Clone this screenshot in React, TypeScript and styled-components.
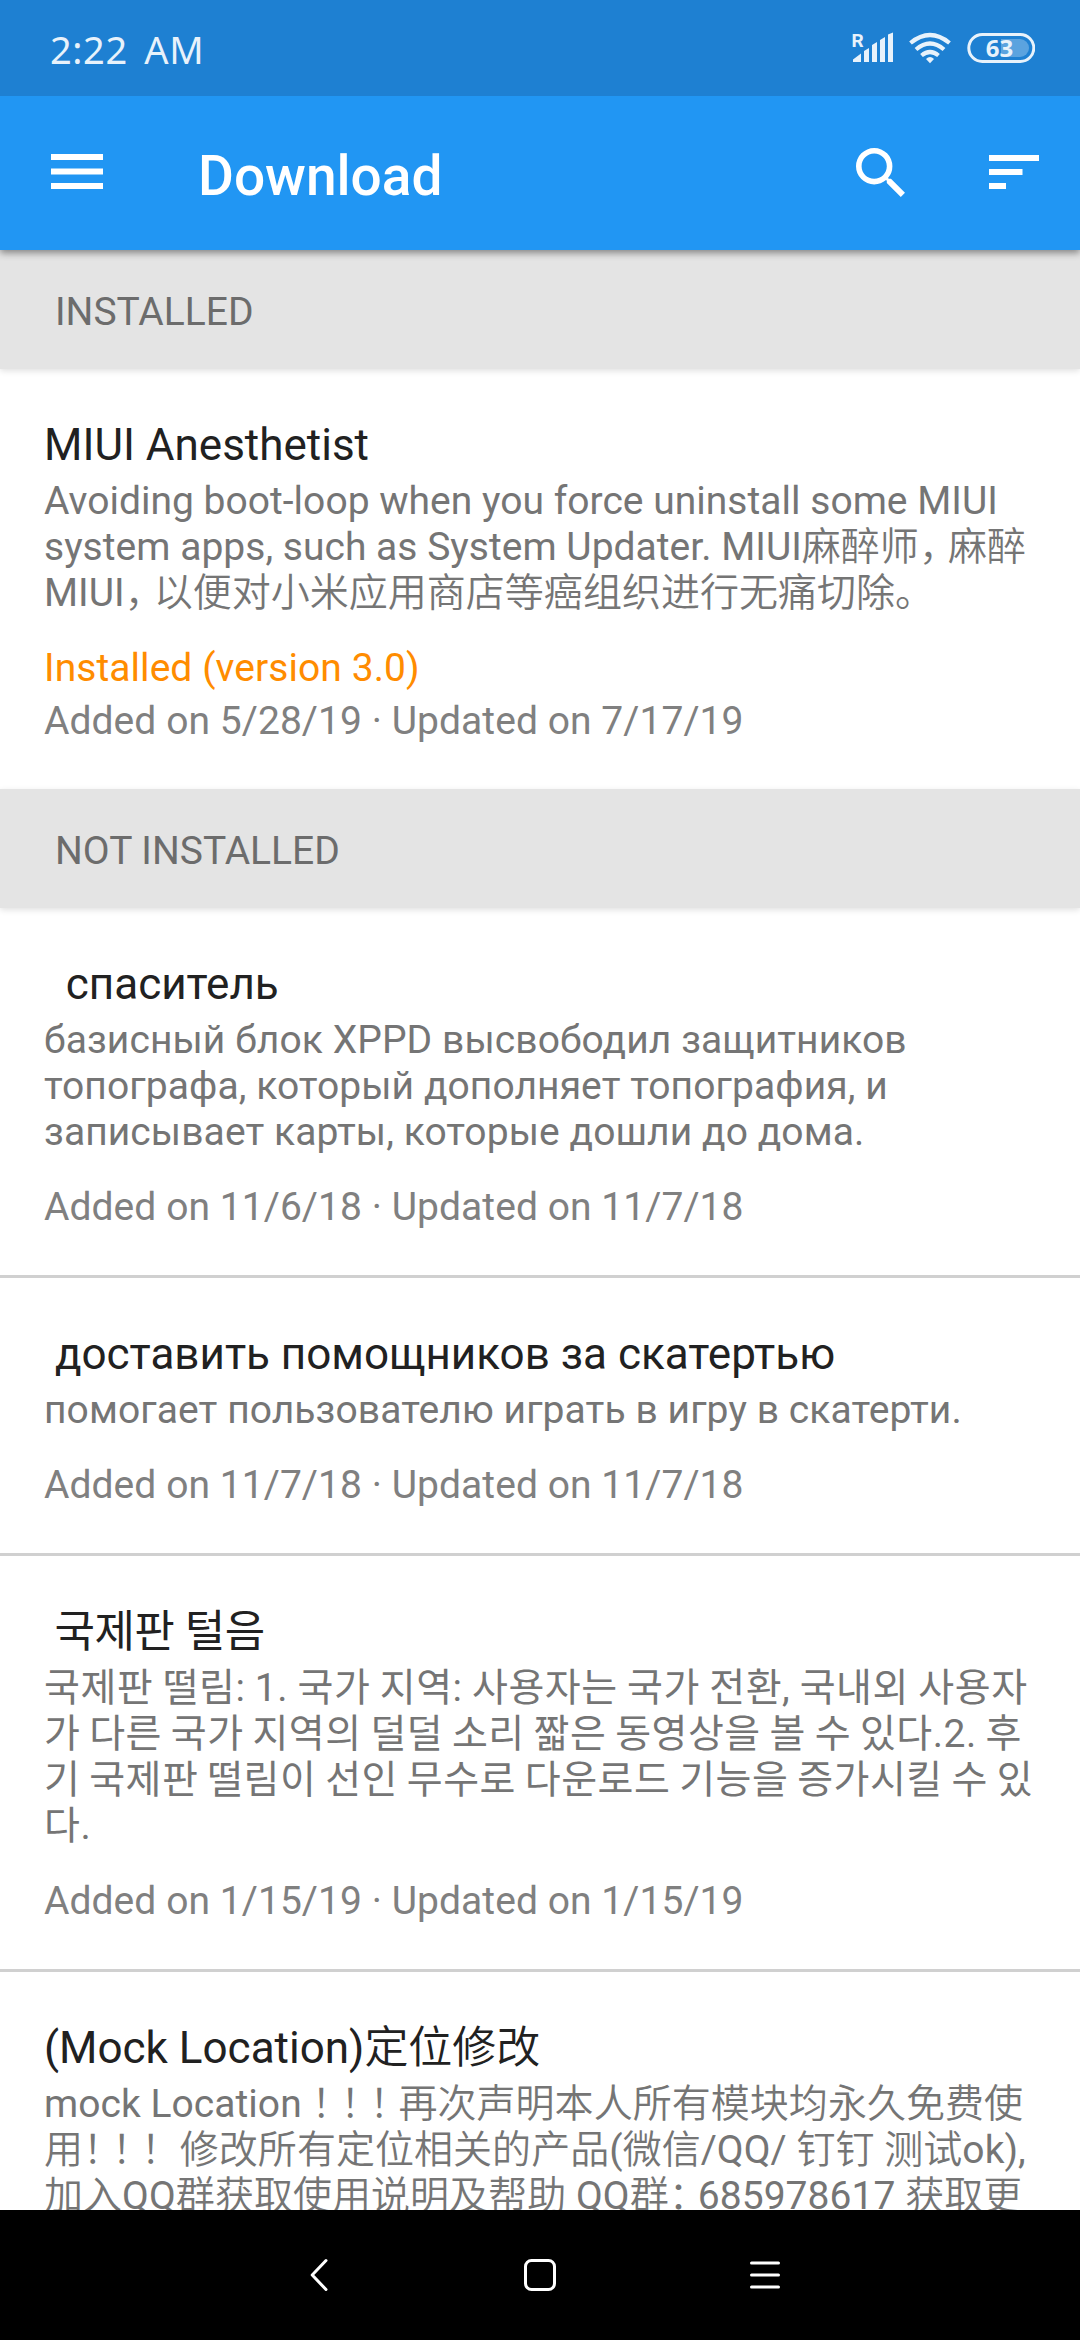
import React from "react";
import styled, { createGlobalStyle } from "styled-components";

const Global = createGlobalStyle`
  *{box-sizing:border-box}
  html,body{margin:0;padding:0;background:#fff}
  body{font-family:Roboto,"Noto Sans CJK KR",sans-serif;overflow:hidden}
`;

const Screen = styled.div`
  width: 1080px;
  height: 2340px;
  display: flex;
  flex-direction: column;
  overflow: hidden;
  background: #fff;
`;

const StatusBar = styled.header`
  height: 96px;
  flex: none;
  display: flex;
  align-items: center;
  justify-content: space-between;
  padding: 0 45px 0 50px;
  background: #1e80d2;
  color: #e8f2fb;
  z-index: 2;
`;

const Clock = styled.span`
  font: 400 38px/44px "Noto Sans", sans-serif;
  letter-spacing: 0.6px;
  word-spacing: 6px;
  padding-top: 1px;
`;

const StatusIcons = styled.svg`
  width: 184px;
  height: 36px;
  flex: none;
`;

const Toolbar = styled.nav`
  height: 154px;
  flex: none;
  display: flex;
  align-items: center;
  padding: 0 41px 2px 51px;
  background: #2196f3;
  color: #fff;
  z-index: 1;
  box-shadow: 0 3px 7px rgba(0, 0, 0, 0.42);
`;

const Glyph = styled.svg<{ $w: number; $h: number }>`
  width: ${(p) => p.$w}px;
  height: ${(p) => p.$h}px;
  flex: none;
  display: block;
`;

const Heading = styled.h1`
  flex: 1;
  margin: 0 0 0 95px;
  padding-top: 8px;
  font: 500 55px/64px Roboto, sans-serif;
`;

const Actions = styled.div`
  display: flex;
  align-items: center;
  gap: 84px;
`;

const List = styled.main`
  flex: 1;
  min-height: 0;
  overflow: hidden;
`;

const SectionHeader = styled.h2`
  height: 119px;
  margin: 0;
  display: flex;
  align-items: center;
  padding: 5px 55px 0;
  background: #e4e4e4;
  color: #6c6c6c;
  font-size: 39px;
  line-height: 46px;
  font-weight: 400;
  box-shadow: 0 2px 6px rgba(0, 0, 0, 0.12);
`;

const Item = styled.article<{ $divided?: boolean }>`
  padding: 49px 44px 45px;
  border-bottom: ${(p) => (p.$divided ? "3px solid #d0d0d0" : "0")};
`;

const Title = styled.h3<{ $track?: number }>`
  margin: 0;
  font-size: 44px;
  line-height: 54px;
  height: 54px;
  font-weight: 400;
  letter-spacing: ${(p) => p.$track ?? 0}px;
  color: #212121;
  white-space: pre;
`;

const Description = styled.p`
  margin: 6px 0 0;
  font-size: 39px;
  line-height: 46px;
  color: #757575;
`;

const Line = styled.span<{ $track?: number; $word?: number }>`
  display: block;
  height: 46px;
  white-space: pre;
  letter-spacing: ${(p) => p.$track ?? 0}px;
  word-spacing: ${(p) => p.$word ?? 0}px;
`;

const Han = styled.span`
  font-family: "Noto Sans CJK SC DemiLight", "Noto Sans CJK SC", sans-serif;
  font-weight: 350;
  line-height: 0;
`;

const Punct = styled(Han)`
  letter-spacing: -10px;
`;

const Meta = styled.div<{ $accent?: boolean; $gap: number }>`
  font-size: 39px;
  line-height: 46px;
  letter-spacing: 0.06px;
  margin-top: ${(p) => p.$gap}px;
  color: ${(p) => (p.$accent ? "#ff8c00" : "#808080")};
  white-space: pre;
`;

const NavBar = styled.footer`
  height: 130px;
  flex: none;
  display: flex;
  align-items: center;
  justify-content: center;
  gap: 191px;
  background: #000;
`;

interface Module {
  title: string;
  lines: string[];
  installed?: string;
  added: string;
  updated: string;
  titleTrack?: number;
  track?: number;
  word?: number[];
}

/* Sets ideographs in a lighter face and tightens full-width punctuation. */
const Mixed = ({ text }: { text: string }) => (
  <>
    {text.split(/([\u4e00-\u9fff]+|[，。！：]+)/).map((part, i) => {
      if (i % 2 === 0) return part;
      return /[，。！：]/.test(part) ? <Punct key={i}>{part}</Punct> : <Han key={i}>{part}</Han>;
    })}
  </>
);

const installed: Module[] = [
  {
    title: "MIUI Anesthetist",
    installed: "Installed (version 3.0)",
    added: "5/28/19",
    updated: "7/17/19",
    track: 0.02,
    lines: [
      "Avoiding boot-loop when you force uninstall some MIUI",
      "system apps, such as System Updater. MIUI麻醉师，麻醉",
      "MIUI，以便对小米应用商店等癌组织进行无痛切除。",
    ],
  },
];

const available: Module[] = [
  {
    title: "  спаситель",
    added: "11/6/18",
    updated: "11/7/18",
    track: 0.08,
    lines: [
      "базисный блок XPPD высвободил защитников",
      "топографа, который дополняет топография, и",
      "записывает карты, которые дошли до дома.",
    ],
  },
  {
    title: " доставить помощников за скатертью",
    added: "11/7/18",
    updated: "11/7/18",
    track: 0.08,
    lines: ["помогает пользователю играть в игру в скатерти."],
  },
  {
    title: " 국제판 털음",
    titleTrack: -0.5,
    track: 0.52,
    word: [-0.75, -1.4, -1.4, 0],
    added: "1/15/19",
    updated: "1/15/19",
    lines: [
      "국제판 떨림: 1. 국가 지역: 사용자는 국가 전환, 국내외 사용자",
      "가 다른 국가 지역의 덜덜 소리 짧은 동영상을 볼 수 있다.2. 후",
      "기 국제판 떨림이 선인 무수로 다운로드 기능을 증가시킬 수 있",
      "다.",
    ],
  },
  {
    title: "(Mock Location)定位修改",
    added: "1/15/19",
    updated: "1/15/19",
    track: 0.04,
    lines: [
      "mock Location ！！！再次声明本人所有模块均永久免费使",
      "用！！！ 修改所有定位相关的产品(微信/QQ/ 钉钉 测试ok),",
      "加入QQ群获取使用说明及帮助 QQ群：685978617 获取更",
    ],
  },
];

const ModuleItem = ({ module, divided }: { module: Module; divided?: boolean }) => (
  <Item $divided={divided}>
    <Title $track={module.titleTrack}>
      <Mixed text={module.title} />
    </Title>
    <Description>
      {module.lines.map((line, i) => (
        <Line key={line} $track={module.track} $word={module.word?.[i]}>
          <Mixed text={line} />
        </Line>
      ))}
    </Description>
    {module.installed && (
      <Meta $accent $gap={29}>
        {module.installed}
      </Meta>
    )}
    <Meta $gap={module.installed ? 7 : 29}>
      {`Added on ${module.added} · Updated on ${module.updated}`}
    </Meta>
  </Item>
);

export default function App() {
  return (
    <Screen>
      <Global />
      <StatusBar>
        <Clock>2:22 AM</Clock>
        <StatusIcons viewBox="851 30 184 36" fill="#e8f2fb">
          <text x="851.5" y="46.5" fontFamily="Roboto" fontWeight="700" fontSize="19">R</text>
          <path d="M853 62v-2.500l8-6v8.500zM864 62V51l5-3v14zM872 62V45l5-3v20zM880 62V40l5-3v25zM888 62V34.500l5-2V62z" />
          <g fill="none" stroke="#e8f2fb" strokeWidth="4.200">
            <path d="M910.500 43Q930 27 949.500 43M916 49.500Q930 37.500 944 49.500M921.500 55.500Q930 48.500 938.500 55.500" />
          </g>
          <path d="M926 59Q930 55 934 59L930 63.200z" />
          <rect x="968.800" y="34.500" width="65" height="27" rx="13.500" fill="none" stroke="#e8f2fb" strokeWidth="3" />
          <path d="M1001 39h19a9 9 0 0 1 0 18h-19z" fill="#5ba3df" />
          <text x="999.500" y="57" textAnchor="middle" fontFamily="Open Sans" fontWeight="700" fontSize="24">63</text>
        </StatusIcons>
      </StatusBar>
      <Toolbar>
        <Glyph $w={52} $h={36} viewBox="0 0 52 36" fill="#fff">
          <path d="M0 0h52v6H0zM0 14.500h52v6H0zM0 29h52v6H0z" />
        </Glyph>
        <Heading>Download</Heading>
        <Actions>
          <Glyph $w={49} $h={49} viewBox="3 3 17.500 17.500" fill="#fff">
            <path d="M15.500 14h-.79l-.28-.27A6.471 6.471 0 0 0 16 9.500 6.500 6.500 0 1 0 9.500 16c1.610 0 3.090-.59 4.230-1.570l.27.28v.79l5 4.990L20.490 19l-4.990-5zm-6 0C7.010 14 5 11.990 5 9.500S7.010 5 9.500 5 14 7.010 14 9.500 11.990 14 9.500 14z" />
          </Glyph>
          <Glyph $w={50} $h={34} viewBox="0 0 50 34" fill="#fff">
            <path d="M0 0h50v6H0zM0 14h33.500v6H0zM0 28h17v6H0z" />
          </Glyph>
        </Actions>
      </Toolbar>
      <List>
        <SectionHeader>INSTALLED</SectionHeader>
        {installed.map((m) => (
          <ModuleItem key={m.title} module={m} />
        ))}
        <SectionHeader>NOT INSTALLED</SectionHeader>
        {available.map((m) => (
          <ModuleItem key={m.title} module={m} divided />
        ))}
      </List>
      <NavBar>
        <Glyph $w={34} $h={34} viewBox="0 0 34 34" fill="none" stroke="#fff" strokeWidth="3" strokeLinecap="round" strokeLinejoin="round">
          <path d="M28 2.500L14.200 17 28 31.500" />
        </Glyph>
        <Glyph $w={34} $h={34} viewBox="0 0 34 34" fill="none" stroke="#fff" strokeWidth="3">
          <rect x="2.500" y="2.500" width="29" height="29" rx="6" />
        </Glyph>
        <Glyph $w={34} $h={34} viewBox="0 0 34 34" fill="none" stroke="#fff" strokeWidth="3" strokeLinecap="round">
          <path d="M3.500 5h27M3.500 17h27M3.500 29h27" />
        </Glyph>
      </NavBar>
    </Screen>
  );
}
